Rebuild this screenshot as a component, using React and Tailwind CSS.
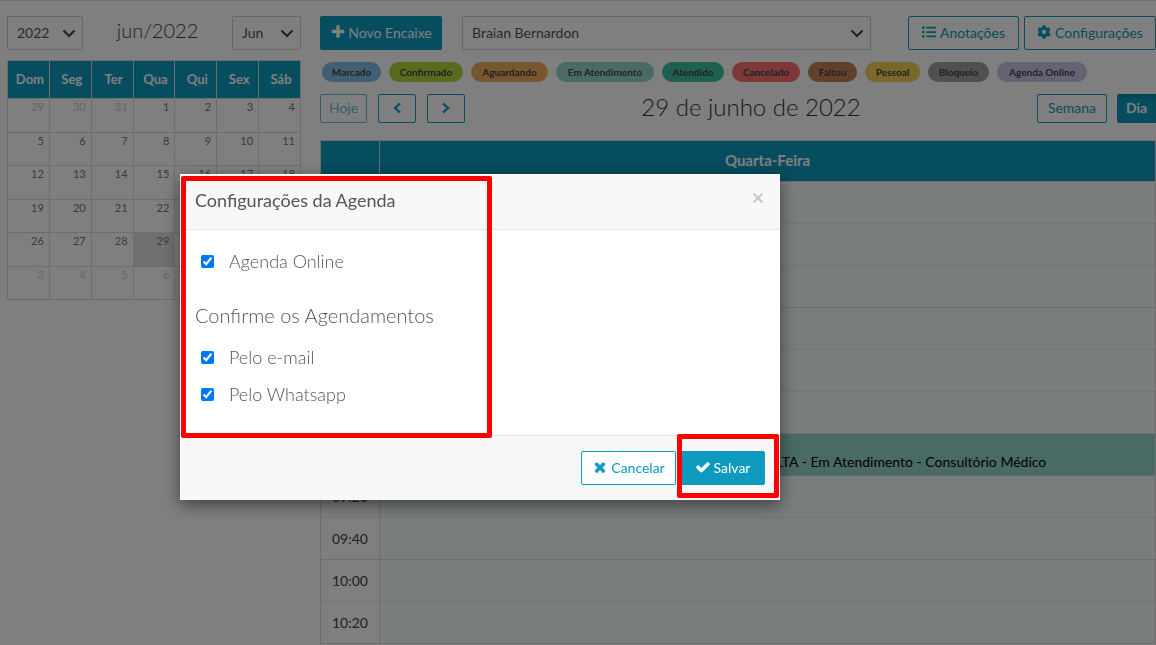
import { FaCog, FaListUl } from 'react-icons/fa'

const WEEKDAYS = ['Dom', 'Seg', 'Ter', 'Qua', 'Qui', 'Sex', 'Sáb']

const WEEKS = [
  [29, 30, 31, 1, 2, 3, 4],
  [5, 6, 7, 8, 9, 10, 11],
  [12, 13, 14, 15, 16, 17, 18],
  [19, 20, 21, 22, 23, 24, 25],
  [26, 27, 28, 29, 30, 1, 2],
  [3, 4, 5, 6, 7, 8, 9],
]

const STATUSES = [
  { label: 'Marcado',        style: 'w-[59px] bg-[#80bfe6]' },
  { label: 'Confirmado',     style: 'w-[74px] bg-[#b2d83c]' },
  { label: 'Aguardando',     style: 'w-[77px] bg-[#f0ae5e]' },
  { label: 'Em Atendimento', style: 'w-[98px] bg-[#94d6c6]' },
  { label: 'Atendido',       style: 'w-[62px] bg-[#3fbf9f]' },
  { label: 'Cancelado',      style: 'w-[68px] bg-[#fc7070]' },
  { label: 'Faltou',         style: 'w-[49px] bg-[#c48058]' },
  { label: 'Pessoal',        style: 'w-[55px] bg-[#f4ce58]' },
  { label: 'Bloqueio',       style: 'w-[61px] bg-[#a0a0a0]' },
  { label: 'Agenda Online',  style: 'w-[90px] bg-[#cdc5e8]' },
]

const SLOTS = ['07:00', '07:20', '07:40', '08:00', '08:20', '08:40', '09:00', '09:20', '09:40', '10:00', '10:20']

const ICONS = {
  plus: 'M1600 736v192q0 40-28 68t-68 28h-416v416q0 40-28 68t-68 28h-192q-40 0-68-28t-28-68v-416h-416q-40 0-68-28t-28-68v-192q0-40 28-68t68-28h416v-416q0-40 28-68t68-28h192q40 0 68 28t28 68v416h416q40 0 68 28t28 68z',
  times: 'M1490 1322q0 40-28 68l-136 136q-28 28-68 28t-68-28l-294-294-294 294q-28 28-68 28t-68-28l-136-136q-28-28-28-68t28-68l294-294-294-294q-28-28-28-68t28-68l136-136q28-28 68-28t68 28l294 294 294-294q28-28 68-28t68 28l136 136q28 28 28 68t-28 68l-294 294 294 294q28 28 28 68z',
  check: 'M1671 566q0 40-28 68l-724 724-136 136q-28 28-68 28t-68-28l-136-136-362-362q-28-28-28-68t28-68l136-136q28-28 68-28t68 28l294 295 656-657q28-28 68-28t68 28l136 136q28 28 28 68z',
}

function Icon({ name }) {
  return (
    <svg viewBox="0 0 1792 1792" className="size-4 shrink-0 fill-current" aria-hidden="true">
      <path d={ICONS[name]} />
    </svg>
  )
}

function Chevron({ d, className }) {
  return (
    <svg viewBox="0 0 14 14" className={className} fill="none" stroke="currentColor" strokeWidth="2.2" aria-hidden="true">
      <path d={d} />
    </svg>
  )
}

function Select({ label, options, className }) {
  return (
    <div className={`relative ${className}`}>
      <select aria-label={label} className="h-[34px] w-full appearance-none rounded-xs border border-[#ccc] bg-white px-[9px] pb-[2px] text-[14px] text-[#555]">
        {options.map((o) => <option key={o}>{o}</option>)}
      </select>
      <Chevron d="M1.5 4.5 7 10l5.5-5.5" className="pointer-events-none absolute right-[7px] top-[10px] size-[14px] text-[#444]" />
    </div>
  )
}

function MiniCalendar() {
  return (
    <table className="mt-[10px] w-full table-fixed border-collapse">
      <thead>
        <tr className="h-[38px] bg-[#0c9abe] text-[13px] text-white">
          {WEEKDAYS.map((d) => (
            <th key={d} className="border border-[#ddd] pl-[3px] font-bold">{d}</th>
          ))}
        </tr>
      </thead>
      <tbody>
        {WEEKS.map((week, i) => (
          <tr key={i} className={`text-[11px] leading-[14px] ${i % 2 ? 'h-[33px]' : 'h-[34px]'}`}>
            {week.map((day, j) => {
              const outside = (i === 0 && day > 7) || (i > 3 && day < 15)
              const today = i === 4 && day === 29
              return (
                <td
                  key={j}
                  className={`border border-[#ddd] pr-[5px] pt-px text-right align-top ${outside ? 'text-[#ccc]' : 'text-[#777]'} ${today ? 'bg-[#e0e0e0]' : ''}`}
                >
                  {day}
                </td>
              )
            })}
          </tr>
        ))}
      </tbody>
    </table>
  )
}

function DayGrid() {
  return (
    <table className="mt-[17px] w-full table-fixed border-collapse border-x border-b border-[#ddd]">
      <colgroup>
        <col className="w-[59px]" />
        <col />
      </colgroup>
      <thead>
        <tr className="h-[41px] bg-[#0c9abe] text-[15px] text-white">
          <th className="border border-[#ddd]" aria-label="Horário" />
          <th className="border-y border-[#ddd] pb-[2px] font-bold">Quarta-Feira</th>
        </tr>
      </thead>
      <tbody>
        {SLOTS.map((time, i) => (
          <tr key={time} className={`h-[42px] border-t border-[#ddd] text-[14px] ${i % 3 ? 'border-dotted' : ''}`}>
            <td className="border-r border-r-[#ddd] text-center text-[#444]">{time}</td>
            <td className={`p-0 ${time === '09:00' ? 'bg-[#94d6c6]' : 'bg-[#f3fafc]'}`}>
              {time === '09:00' && (
                <p className="pl-[347px] pt-[15px] leading-[20px] whitespace-nowrap text-black">
                  CONSULTA - Em Atendimento - Consultório Médico
                </p>
              )}
            </td>
          </tr>
        ))}
      </tbody>
    </table>
  )
}

const outline = 'flex items-center justify-center rounded-xs border border-[#0c9abe] bg-white pb-[2px] text-[14px] text-[#0c9abe]'
const solid = 'flex items-center justify-center rounded-xs bg-[#0c9abe] pb-[2px] text-[14px] text-white'

function Option({ label, className }) {
  return (
    <label className={`flex items-center gap-[15px] pl-[6px] text-[18px] leading-[24px] font-light text-[#555] ${className}`}>
      <input type="checkbox" defaultChecked className="size-[13px]" />
      {label}
    </label>
  )
}

function SettingsModal() {
  return (
    <div className="fixed inset-0 bg-black/50 pl-[180px] pt-[174px]">
      <div role="dialog" aria-labelledby="settings-title" className="relative w-[600px] bg-white shadow-[0_5px_15px_rgba(0,0,0,0.5)]">
        <header className="flex h-14 items-center justify-between border-b border-[#e5e5e5] bg-[#f8f8f8] px-[15px]">
          <h4 id="settings-title" className="pb-[2px] text-[18px] text-[#555]">Configurações da Agenda</h4>
          <button aria-label="Fechar" className="pb-2 text-[#c8c8c8]">
            <Chevron d="M2.5 2.5l9 9M11.5 2.5l-9 9" className="size-[14px]" />
          </button>
        </header>

        <div className="px-[15px] pt-[19px] pb-[29px]">
          <Option label="Agenda Online" />
          <h3 className="mt-[29px] text-[20px] leading-[26px] font-light text-[#555]">Confirme os Agendamentos</h3>
          <Option label="Pelo e-mail" className="mt-[17px]" />
          <Option label="Pelo Whatsapp" className="mt-[13px]" />
        </div>

        <footer className="flex justify-end gap-1 border-t border-[#e5e5e5] bg-[#f8f8f8] p-[15px]">
          <button className={`${outline} h-[34px] w-[95px] gap-[3px]`}><Icon name="times" />Cancelar</button>
          <button className={`${solid} h-[34px] w-[85px] gap-[3px]`}><Icon name="check" />Salvar</button>
        </footer>

        {/* highlight frames */}
        <div className="pointer-events-none absolute left-px top-[2px] h-[262px] w-[311px] rounded-xs border-5 border-[#f00]" />
        <div className="pointer-events-none absolute right-px bottom-[2px] h-16 w-[102px] rounded-xs border-5 border-[#f00]" />
      </div>
    </div>
  )
}

export default function App() {
  return (
    <div className="h-screen overflow-hidden border-t border-[#e0e0e0] bg-white font-['Lato',sans-serif] text-[#444]">
      <div className="flex gap-[19px] pl-[7px] pt-[15px]">
        <aside className="w-[294px] shrink-0">
          <div className="flex justify-between">
            <Select label="Ano" options={['2022']} className="w-[76px]" />
            <h2 className="text-[20px] leading-[28px] font-light">jun/2022</h2>
            <Select label="Mês" options={['Jun']} className="w-[69px]" />
          </div>
          <MiniCalendar />
        </aside>

        <main className="min-w-0 flex-1">
          <div className="flex">
            <button className={`${solid} h-[34px] w-[122px] gap-[2px]`}><Icon name="plus" />Novo Encaixe</button>
            <Select label="Profissional" options={['Braian Bernardon']} className="ml-5 mr-[37px] flex-1" />
            <button className={`${outline} h-[34px] w-[111px] gap-1`}><FaListUl />Anotações</button>
            <button className={`${outline} ml-[5px] h-[34px] w-[132px] gap-1`}><FaCog />Configurações</button>
          </div>

          <ul className="mt-3 flex gap-2 pl-[2px]">
            {STATUSES.map((s) => (
              <li key={s.label} className={`rounded-full text-center text-[10px] leading-[20px] font-bold whitespace-nowrap text-[#444] ${s.style}`}>
                {s.label}
              </li>
            ))}
          </ul>

          <div className="mt-3 flex h-[29px] items-center justify-between">
            <div className="flex gap-[11px]">
              <button disabled className={`${outline} h-[29px] w-[47px] opacity-65`}>Hoje</button>
              <button aria-label="Anterior" className={`${outline} h-[29px] w-[38px]`}>
                <Chevron d="M10 2.5 5 7l5 4.5" className="size-[14px]" />
              </button>
              <button aria-label="Próximo" className={`${outline} h-[29px] w-[38px]`}>
                <Chevron d="M4 2.5 9 7l-5 4.5" className="size-[14px]" />
              </button>
            </div>
            <h2 className="pb-1 text-[24px] font-light text-[#333]">29 de junho de 2022</h2>
            <div className="flex gap-[10px]">
              <button className={`${outline} h-[29px] w-[70px]`}>Semana</button>
              <button className={`${solid} h-[29px] w-[39px] rounded-r-none font-bold shadow-[inset_0_3px_5px_rgba(0,0,0,0.125)]`}>Dia</button>
            </div>
          </div>

          <DayGrid />
        </main>
      </div>

      <SettingsModal />
    </div>
  )
}
